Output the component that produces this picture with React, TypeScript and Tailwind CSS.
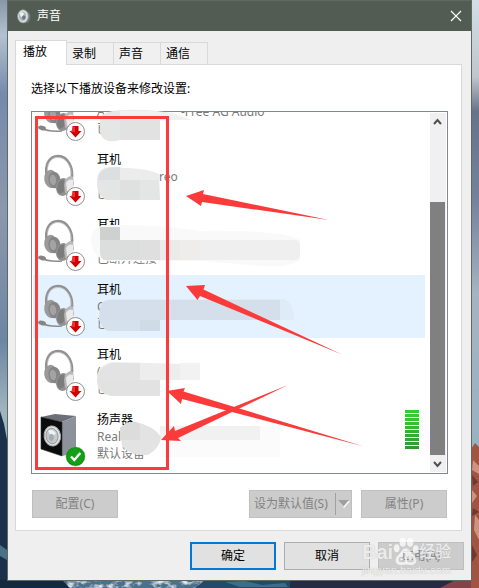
import React, { useState } from 'react';

interface Device {
  name: string;
  desc: string;
  tail?: string;
  status: string;
  kind: 'headset' | 'headphones' | 'speaker';
}

const tabs = ['播放', '录制', '声音', '通信'];

const devices: Device[] = [
  { name: '', desc: 'A', tail: '-Free AG Audio', status: '已断开连接', kind: 'headset' },
  { name: '耳机', desc: '', tail: 'reo', status: '已断开连接', kind: 'headphones' },
  { name: '耳机', desc: '', status: '已断开连接', kind: 'headset' },
  { name: '耳机', desc: 'C', status: '已断开连接', kind: 'headset' },
  { name: '耳机', desc: '(', status: '已断开连接', kind: 'headphones' },
  { name: '扬声器', desc: 'Realtek', status: '默认设备', kind: 'speaker' },
];

const meterColors = [
  'bg-[#33cc33]', 'bg-[#33cc33]', 'bg-[#33c633]', 'bg-[#33c033]', 'bg-[#33ba33]',
  'bg-[#33b233]', 'bg-[#33ac33]', 'bg-[#33a633]', 'bg-[#339f33]', 'bg-[#339933]',
];

const Wallpaper = () => (
  <svg className="absolute inset-0 w-full h-full" viewBox="0 0 479 588" preserveAspectRatio="none" aria-hidden="true">
    <defs>
      <linearGradient id="skyLeft" x1="0" y1="0" x2="0" y2="1">
        <stop offset="0" stopColor="#8797a6" />
        <stop offset="0.06" stopColor="#b3c2d0" />
        <stop offset="0.16" stopColor="#758aac" />
        <stop offset="0.36" stopColor="#8b98ad" />
        <stop offset="0.58" stopColor="#6d86a3" />
        <stop offset="0.7" stopColor="#9fb5bf" />
      </linearGradient>
      <linearGradient id="skyRight" x1="0" y1="0" x2="0" y2="1">
        <stop offset="0" stopColor="#d3dee6" />
        <stop offset="0.13" stopColor="#c0c6cd" />
        <stop offset="0.19" stopColor="#657489" />
        <stop offset="0.34" stopColor="#74829d" />
        <stop offset="0.5" stopColor="#a6b3c0" />
        <stop offset="0.75" stopColor="#99b2c2" />
      </linearGradient>
      <filter id="rock" x="0" y="0" width="1" height="1">
        <feTurbulence type="fractalNoise" baseFrequency="0.12 0.2" numOctaves="3" seed="4" result="n" />
        <feColorMatrix in="n" values="0 0 0 0 0.75  0 0 0 0 0.82  0 0 0 0 0.88  3 0 0 0 -1.4" result="m" />
        <feComposite in="m" in2="SourceAlpha" operator="in" result="k" />
        <feMerge>
          <feMergeNode in="SourceGraphic" />
          <feMergeNode in="k" />
        </feMerge>
      </filter>
    </defs>
    <rect width="240" height="588" fill="url(#skyLeft)" />
    <rect x="240" width="239" height="588" fill="url(#skyRight)" />
    <path d="M0 411L4 424L8 445V588H0Z" fill="#1b304a" />
    <path d="M0 545L7 550V560L0 556Z" fill="#4a7186" />
    <rect y="580" width="479" height="8" fill="#13293f" />
    <g filter="url(#rock)">
      <path d="M62 580H205L196 588H70Z" fill="#4b728d" />
    </g>
    <path d="M205 580H290V588H196Z" fill="#234a68" />
    <path d="M225 582L245 581L262 585L285 583L288 587L240 587Z" fill="#3f6d89" />
    <rect x="290" y="580" width="160" height="8" fill="#252b45" />
    <path d="M440 588L455 580H479V588Z" fill="#84434a" />
    <path d="M471 449L475 443L479 447V588H471Z" fill="#a25442" />
    <path d="M473 460L479 466V474L472 470ZM472 490L477 496L472 503ZM475 515L479 520V540L474 530Z" fill="#cf9280" />
    <path d="M472 475L478 482L473 486ZM473 508L479 512L472 516ZM472 545L477 555L472 562Z" fill="#71362f" />
  </svg>
);

const SoundIcon = () => (
  <svg width="14" height="15" viewBox="0 0 14 15" aria-hidden="true">
    <ellipse cx="8.5" cy="8" rx="5" ry="6.2" fill="#6f7775" />
    <ellipse cx="6" cy="7.3" rx="5.4" ry="6.6" fill="#d9dfe0" stroke="#8c9493" strokeWidth="0.8" />
    <ellipse cx="5.6" cy="7.3" rx="3.6" ry="4.6" fill="#aab4b7" />
    <path d="M3 4Q6 2 7 5L5 8Q3 8 3 4Z" fill="#edf2f3" />
    <ellipse cx="6.8" cy="8.6" rx="1.7" ry="2.1" fill="#6e7879" />
  </svg>
);

const DisconnectedBadge = () => (
  <g>
    <circle cx="37.5" cy="43.5" r="9" fill="#fff" stroke="#8f8f8f" strokeWidth="1" />
    <path d="M34.5 38H40.5V43H43.5L37.5 49.5L31.5 43H34.5Z" fill="#d40000" />
    <path d="M35 38.5H37V44H33Z" fill="#e83030" />
  </g>
);

const HeadphonesIcon = ({ mic }: { mic: boolean }) => (
  <svg width="48" height="54" viewBox="0 0 48 54" className="shrink-0" aria-hidden="true">
    <path d="M9 24C6 11 12 3 20 3C30 3 36 15 33.5 27" fill="none" stroke="#929292" strokeWidth="2.6" />
    <path d="M10 20C8 11 13 4.5 20 4.5C28 4.5 34 14 33 22" fill="none" stroke="#c6c6c6" strokeWidth="0.8" />
    <ellipse cx="13" cy="26" rx="6.8" ry="9.2" fill="#9a9a9a" transform="rotate(-8 13 26)" />
    <ellipse cx="16.5" cy="27" rx="6" ry="8.4" fill="#858585" transform="rotate(-8 16.5 27)" />
    <ellipse cx="15" cy="27" rx="3.2" ry="5.2" fill="#a3a3a3" transform="rotate(-8 15 27)" />
    {mic && (
      <g>
        <path d="M3 40Q10 44 24 43" fill="none" stroke="#8c8c8c" strokeWidth="1.5" />
        <ellipse cx="4" cy="40" rx="4" ry="2.2" fill="#858585" transform="rotate(12 4 40)" />
      </g>
    )}
    <ellipse cx="25" cy="34" rx="7" ry="9" fill="#929292" transform="rotate(10 25 34)" />
    <ellipse cx="23.5" cy="33.5" rx="4.2" ry="7.2" fill="#7c7c7c" transform="rotate(12 23.5 33.5)" />
    <path d="M27 27Q32 21 35 24L36 31Q34 38 28 41Q25 34 27 27Z" fill="#b9b9b9" />
    <path d="M28 30Q31 25 35 27L35 34Q32 38 29 38Z" fill="#ebebeb" />
    <DisconnectedBadge />
  </svg>
);

const SpeakerIcon = () => (
  <svg width="48" height="54" viewBox="0 0 48 54" className="shrink-0" aria-hidden="true">
    <path d="M3 4L17 1L38 3L24 9Z" fill="#6c6f77" />
    <path d="M24 9L38 3V40L24 43Z" fill="#8d919c" />
    <path d="M3 4L24 9V43L3 36Z" fill="#0c0c0c" stroke="#2e3035" strokeWidth="0.6" />
    <ellipse cx="14.3" cy="23" rx="8.2" ry="10" fill="#e3e6e6" stroke="#a7adae" strokeWidth="1" transform="rotate(-8 14.3 23)" />
    <ellipse cx="14" cy="23" rx="6" ry="7.8" fill="#c3cacd" stroke="#868c8e" strokeWidth="0.8" transform="rotate(-8 14 23)" />
    <path d="M10 18Q15 15 18 21L13 23Z" fill="#eef2f3" />
    <ellipse cx="13.4" cy="24.5" rx="2.4" ry="3.4" fill="#a4acb0" />
    <circle cx="37.5" cy="43.5" r="9.5" fill="#0a8a0a" stroke="#6a9c6a" strokeWidth="0.5" />
    <circle cx="37.5" cy="43.5" r="8.4" fill="#14a014" />
    <path d="M33 43.5L36.3 47L42.3 40" fill="none" stroke="#fff" strokeWidth="2.4" />
  </svg>
);

// Mosaic patches that cover the device details
const Mosaic = () => (
  <g>
    <path d="M100 118Q104 110 125 110Q150 109 175 114L191 120H160V140H120Q110 143 104 139Q100 135 100 130Z" fill="#e5e6e6" />
    <path d="M120 120H160V140H120Z" fill="#e2e2e2" />
    <path d="M120 111Q150 109 175 114L191 120H120Z" fill="#f1f1f1" />

    <path d="M97 182Q97 167 112 167Q140 168 159 175L160 200H106Q97 196 97 182Z" fill="#e4e5e5" />
    <path d="M100 173Q106 167 120 167V180H98Z" fill="#dcdfdf" />
    <path d="M120 168Q150 168 160 175V180H120Z" fill="#ececec" />
    <path d="M120 180H140V200H120Z" fill="#dfe0e0" />

    <path d="M91 240Q92 225 108 225Q160 224 200 231Q260 230 290 236L300 240V260Q290 268 262 266L200 261H110Q92 259 91 240Z" fill="#f9f9f9" />
    <rect x="100" y="227" width="20" height="13" fill="#cfd0d0" />
    <path d="M100 240H140V260H104Q100 258 100 252Z" fill="#dcdddd" />
    <rect x="140" y="240" width="20" height="20" fill="#dfdfdf" />
    <rect x="160" y="240" width="20" height="20" fill="#ebebeb" />
    <rect x="180" y="240" width="20" height="20" fill="#eeedec" />
    <path d="M200 240H296Q300 240 300 246V254Q300 260 294 260H200Z" fill="#efefef" />

    <path d="M100 306Q102 300 110 299H284Q294 303 294 320H160V331H110Q100 328 99 318Z" fill="#dfecf8" />
    <path d="M100 308Q102 300 110 300H280V320H99Z" fill="#d4dfeb" />
    <path d="M100 320H160V331H108Q101 328 100 320Z" fill="#d5e1ec" />
    <rect x="140" y="320" width="20" height="11" fill="#cfdce8" />

    <path d="M97 382Q96 365 112 362L186 364L200 363V380H160V396H112Q98 394 97 382Z" fill="#ededed" />
    <path d="M112 363H140V380H97Q98 367 112 363Z" fill="#e3e3e3" />
    <path d="M97 380H160V396H112Q99 394 97 380Z" fill="#e2e2e2" />
    <rect x="180" y="363" width="20" height="17" fill="#f2f2f2" />

    <path d="M160 426H260V440H160Z" fill="#f1f1f1" />
    <path d="M260 426H280V457H160V440H260Z" fill="#fbfbfb" />
    <path d="M120 428Q126 421 136 422Q154 426 161 437Q160 448 148 455Q130 456 122 446Z" fill="#e3e3e3" />
    <path d="M120 428Q126 421 136 422L140 424V440H120Z" fill="#dcdcdc" />
  </g>
);

const Arrows = () => (
  <g fill="#fb3a3a">
    <rect x="36.5" y="117.5" width="131" height="351" fill="none" stroke="#fb3a3a" strokeWidth="3" />
    <path d="M186 196L204 190L203 194L329 220L202 202L201 206Z" />
    <path d="M186 286L205 285L203.5 289.5L342 354.5L200 296L197.5 300Z" />
    <path d="M167 391L185 388L183.5 391.5L364 446.5L182 399L181 404Z" />
    <path d="M161 440L174 426L175 431L288 385L178 438L181 441Z" />
  </g>
);

const Watermark = () => (
  <div className="absolute right-[11px] bottom-3 w-[106px] text-white/75 pointer-events-none [text-shadow:0_0_1px_#b0b0b0] font-['Liberation_Sans','Noto_Sans_CJK_SC',sans-serif]">
    <div className="flex items-center h-6">
      <span className="text-xl font-bold">Bai</span>
      <svg width="26" height="32" viewBox="0 0 28 32" fill="currentColor" className="shrink-0" aria-hidden="true">
        <ellipse cx="4" cy="12" rx="3" ry="4.4" />
        <ellipse cx="10.5" cy="5.5" rx="3.4" ry="4.8" />
        <ellipse cx="18.5" cy="5.5" rx="3.4" ry="4.8" />
        <ellipse cx="24.5" cy="13" rx="3" ry="4.4" />
        <path fillRule="evenodd" d="M14 12C18 12 19 17 23 20C27 24 25 30 20 30Q14 29 8 30C3 30 1 24 5 20C9 17 10 12 14 12ZM11 17V21H8Q6 21 6 24Q6 27 8 27H13V17ZM11 23V25H8V23ZM15 21V25Q15 27 17 27H22V21H20V25H17V21Z" />
      </svg>
      <span className="text-base font-medium">经验</span>
    </div>
    <div className="text-[11px] leading-3">jingyan.baidu.com</div>
  </div>
);

const DeviceRow = ({ device, selected, onSelect }: { device: Device; selected: boolean; onSelect: () => void }) => (
  <li
    role="option"
    aria-selected={selected}
    onClick={onSelect}
    className={selected ? 'flex shrink-0 bg-[#e3f2fe] pl-[5px] h-[63px]' : 'flex shrink-0 pl-[5px] h-[63px]'}
  >
    <div className="pt-2">
      {device.kind === 'speaker' ? <SpeakerIcon /> : <HeadphonesIcon mic={device.kind === 'headset'} />}
    </div>
    <div className="flex-1 pl-[11px] py-1.5 leading-[17px] text-[#7a7a7a]">
      <div className="h-[17px] text-black">{device.name}</div>
      <div className="flex h-[17px] leading-[18px]">
        <span className={device.tail === 'reo' ? 'w-[62px]' : 'w-[84px]'}>{device.desc}</span>
        {device.tail && <span>{device.tail}</span>}
      </div>
      <div>{device.status}</div>
    </div>
    {device.kind === 'speaker' && (
      <div className="flex flex-col gap-px w-3.5 mr-1.5 pt-[5px]">
        {meterColors.map((color, index) => (
          <span key={index} className={`h-[3px] ${color}`} />
        ))}
      </div>
    )}
  </li>
);

const App: React.FC = () => {
  const [activeTab, setActiveTab] = useState(0);
  const [selected, setSelected] = useState(3);

  return (
    <div className="relative h-screen px-[7px] pb-[7px] overflow-hidden text-xs text-black font-['Noto_Sans','Noto_Sans_CJK_SC',sans-serif]">
      <Wallpaper />

      <div className="relative flex flex-col h-full bg-[#efefef] border border-[#5f6b60]">
        {/* Title bar */}
        <header className="flex items-center h-[30px] pl-[9px] pr-[7px] bg-[#525c52] text-white">
          <SoundIcon />
          <h1 className="flex-1 pl-1.5">声音</h1>
          <button aria-label="关闭" className="p-0.5">
            <svg width="12" height="12" viewBox="0 0 12 12" stroke="#fff" strokeWidth="1.2" aria-hidden="true">
              <path d="M1 1L11 11M11 1L1 11" />
            </svg>
          </button>
        </header>

        {/* Tabs */}
        <div role="tablist" className="relative z-10 flex items-end pt-[9px] pl-[7px] -mb-px">
          {tabs.map((tab, index) => (
            <button
              key={tab}
              role="tab"
              aria-selected={index === activeTab}
              onClick={() => setActiveTab(index)}
              className={
                index === activeTab
                  ? 'w-[52px] h-[25px] pl-[7px] pb-0.5 text-left bg-white border border-b-0 border-[#d9d9d9]'
                  : 'w-[47px] h-[23px] pl-[5px] text-left bg-[#f0f0f0] border border-l-0 border-[#d9d9d9]'
              }
            >
              {tab}
            </button>
          ))}
        </div>

        {/* Device panel */}
        <main className="flex flex-col flex-1 min-h-0 ml-[7px] mr-[9px] pt-4 pl-[15px] pr-[13px] pb-3 bg-white border border-[#d9d9d9]">
          <p className="leading-4 pb-[14px]">选择以下播放设备来修改设置:</p>

          <div className="flex flex-1 min-h-0 p-px border border-[#828790] bg-white">
            <ul role="listbox" aria-label="播放设备" className="flex flex-col flex-1 gap-0.5 overflow-hidden -mt-px mr-[5px]">
              {devices.map((device, index) => (
                <React.Fragment key={index}>
                  {index === 0 && <li className="shrink-0 -mt-[34px]" aria-hidden="true" />}
                  <DeviceRow device={device} selected={index === selected} onSelect={() => setSelected(index)} />
                </React.Fragment>
              ))}
            </ul>
            <div className="flex flex-col w-4 bg-[#f0f0f0]" aria-hidden="true">
              <svg width="16" height="17" viewBox="0 0 16 17" fill="none" stroke="#505050" strokeWidth="2">
                <path d="M4 11L7.5 7L11 11" />
              </svg>
              <div className="flex-1 flex flex-col pr-px">
                <div className="basis-1/5 grow" />
                <div className="basis-[78%] bg-[#808080]" />
              </div>
              <svg width="16" height="17" viewBox="0 0 16 17" fill="none" stroke="#505050" strokeWidth="2">
                <path d="M4 7L7.5 11L11 7" />
              </svg>
            </div>
          </div>

          <div className="flex gap-[9px] pt-4 px-px text-[#838383]">
            <button disabled className="w-[86px] h-7 mr-auto bg-[#ccc] border border-[#bfbfbf]">配置(C)</button>
            <button disabled className="flex items-center w-[103px] h-7 pl-1 bg-[#ccc] border border-[#bfbfbf]">
              <span className="flex-1 text-left">设为默认值(S)</span>
              <span className="w-px h-[22px] bg-[#a0a0a0]" />
              <svg width="15" height="10" viewBox="0 0 15 10" aria-hidden="true">
                <path d="M3 2H14L8 9Z" fill="#fff" />
                <path d="M2 1H13L7.5 7.5Z" fill="#a0a0a0" />
              </svg>
            </button>
            <button disabled className="w-[86px] h-7 bg-[#ccc] border border-[#bfbfbf]">属性(P)</button>
          </div>
        </main>

        {/* Dialog buttons */}
        <footer className="flex justify-end gap-2 pt-[11px] pr-[7px] pb-2.5">
          <button className="w-[86px] h-7 bg-[#e1e1e1] border-2 border-[#0078d7]">确定</button>
          <button className="w-[86px] h-7 bg-[#e1e1e1] border border-[#adadad]">取消</button>
          <button disabled className="w-[86px] h-7 bg-[#ccc] border border-[#bfbfbf] text-[#838383]">应用(A)</button>
        </footer>
      </div>

      <svg className="absolute left-0 top-0 pointer-events-none" width="479" height="588" viewBox="0 0 479 588" aria-hidden="true">
        <Mosaic />
        <Arrows />
      </svg>
      <Watermark />
    </div>
  );
};

export default App;
